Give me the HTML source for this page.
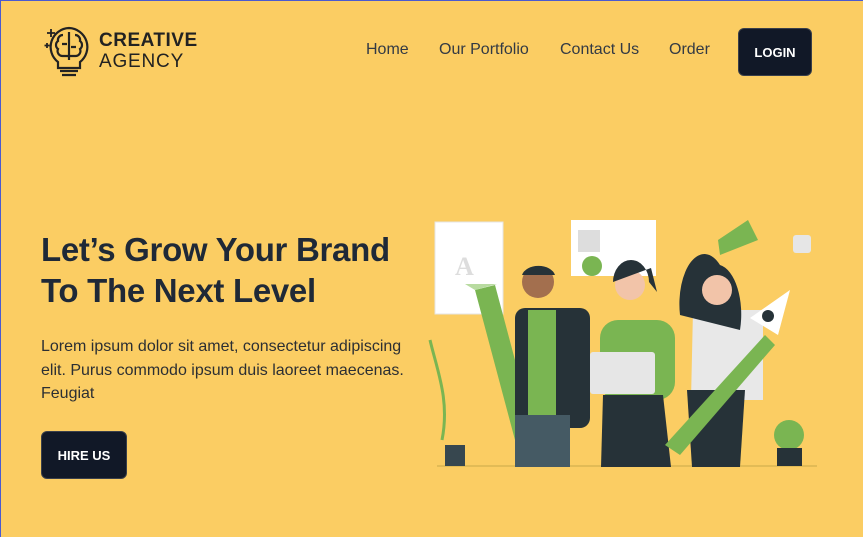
<!DOCTYPE html>
<html><head><meta charset="utf-8"><style>
*{margin:0;padding:0;box-sizing:border-box}
html,body{width:863px;height:537px;overflow:hidden}
body{background:#fbcd63;font-family:"Liberation Sans",sans-serif;position:relative;box-shadow:inset 1px 1px 0 #4a5ad0}
.logo{position:absolute;left:43px;top:25px}
.lt{position:absolute;left:99px;top:30px;color:#222;line-height:21px}
.lt b{display:block;font-size:19px;letter-spacing:.5px;font-weight:900}
.lt span{display:block;font-size:19px;letter-spacing:.8px}
.nav{position:absolute;top:41px;font-size:16px;color:#333a44}
.btn{position:absolute;background:#111827;color:#fff;font-weight:bold;font-size:13px;border-radius:6px;display:flex;align-items:center;justify-content:center;border:1px solid #3a3f4a}
h1{position:absolute;left:41px;top:229px;font-size:33px;line-height:41px;color:#1f2937;font-weight:bold;letter-spacing:-.3px}
p{position:absolute;left:41px;top:335px;width:380px;font-size:16px;line-height:23.5px;color:#2c2f33}
</style></head><body>
<svg class="logo" width="52" height="54" viewBox="0 0 52 54" fill="none" stroke="#222" stroke-width="2.2">
<path d="M8 4v8M4 8h8M4 18v5M1.5 20.5h5" stroke-width="1.8"/>
<path d="M26 3a19 19 0 0 0-11 34v6h22v-6a19 19 0 0 0-11-34z"/>
<path d="M26 7v28M20 10a5 5 0 0 0-5 6a5 5 0 0 0 0 8a5 5 0 0 0 5 7h6M32 10a5 5 0 0 1 5 6a5 5 0 0 1 0 8a5 5 0 0 1-5 7h-6M19 19h5M28 22h5"/>
<path d="M17 46h18M19 50h14"/></svg>
<div class="lt"><b>CREATIVE</b><span>AGENCY</span></div>
<div class="nav" style="left:366px">Home</div>
<div class="nav" style="left:439px">Our Portfolio</div>
<div class="nav" style="left:560px">Contact Us</div>
<div class="nav" style="left:669px">Order</div>
<div class="btn" style="left:738px;top:28px;width:74px;height:48px">LOGIN</div>
<h1>Let’s Grow Your Brand<br>To The Next Level</h1>
<p>Lorem ipsum dolor sit amet, consectetur adipiscing elit. Purus commodo ipsum duis laoreet maecenas. Feugiat</p>
<div class="btn" style="left:41px;top:431px;width:86px;height:48px">HIRE US</div>
<svg style="position:absolute;left:425px;top:200px" width="410" height="280" viewBox="0 0 410 280">
<line x1="12" y1="266" x2="392" y2="266" stroke="#c9a94a" stroke-width="1"/>
<rect x="10" y="22" width="68" height="92" fill="#fff" stroke="#e5e5e5"/>
<text x="30" y="75" font-size="26" fill="#ddd" font-family="Liberation Serif" font-weight="bold">A</text>
<rect x="146" y="20" width="85" height="56" fill="#fff"/>
<rect x="153" y="30" width="22" height="22" fill="#ddd"/>
<circle cx="167" cy="66" r="10" fill="#7ab552"/>
<path d="M50 90l40 150l20-5-40-150z" fill="#7ab552"/>
<path d="M40 84l10 6l22-6z" fill="#b8dba0"/>
<rect x="90" y="108" width="75" height="120" rx="10" fill="#263238"/>
<rect x="103" y="110" width="28" height="110" fill="#7ab552"/>
<rect x="90" y="215" width="55" height="52" fill="#455a64"/>
<circle cx="113" cy="82" r="16" fill="#a36f4e"/><path d="M97 75a17 12 0 0 1 33 0z" fill="#263238"/>
<rect x="175" y="120" width="75" height="80" rx="18" fill="#7ab552"/>
<path d="M178 195h60l8 72h-70z" fill="#263238"/>
<circle cx="205" cy="85" r="15" fill="#f2c4a9"/><path d="M188 82a18 22 0 0 1 36 0l8 10-6-24z" fill="#263238"/>
<rect x="165" y="152" width="65" height="42" rx="3" fill="#e6e6e6"/>
<path d="M268 110h70v90h-72z" fill="#e8e8e8"/>
<path d="M262 190h58l-5 77h-48z" fill="#263238"/>
<path d="M255 115a25 50 0 0 1 40-50a25 50 0 0 1 20 65z" fill="#263238"/>
<circle cx="292" cy="90" r="15" fill="#f2c4a9"/>
<path d="M240 245l100-110l10 10l-95 110z" fill="#7ab552"/>
<path d="M325 118l40-28l-12 45z" fill="#fff"/><circle cx="343" cy="116" r="6" fill="#263238"/>
<path d="M293 40l30-20l10 20l-38 15z" fill="#7ab552"/>
<path d="M17 240c8-40-5-70-12-100" stroke="#7ab552" stroke-width="3" fill="none"/>
<rect x="20" y="245" width="20" height="21" fill="#37474f"/>
<circle cx="364" cy="235" r="15" fill="#7ab552"/><rect x="352" y="248" width="25" height="18" fill="#263238"/>
<rect x="368" y="35" width="18" height="18" rx="3" fill="#e6e6e6"/>
</svg>
</body></html>
